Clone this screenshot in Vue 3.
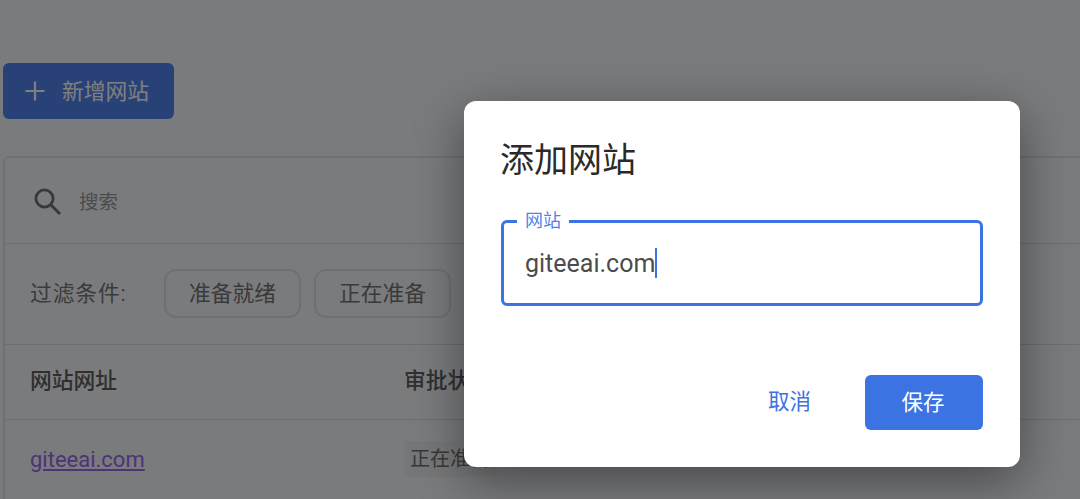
<script setup>
import { ref } from 'vue'

const site = ref('giteeai.com')
const filters = ['准备就绪', '正在准备']
</script>

<template>
  <div class="page">
    <button class="add-btn">
      <svg class="plus" viewBox="0 0 20 20" width="20" height="20" aria-hidden="true">
        <path d="M10 0.5V19.5M0.5 10H19.5" fill="none" stroke="currentColor" stroke-width="2.2" />
      </svg>
      <span class="add-label">新增网站</span>
    </button>

    <section class="card">
      <div class="search">
        <svg class="search-icon" viewBox="0 0 28 28" width="28" height="28" aria-hidden="true">
          <circle cx="11.5" cy="11.5" r="8.6" fill="none" stroke="currentColor" stroke-width="2.8" />
          <path d="M17.8 17.8L27 27" fill="none" stroke="currentColor" stroke-width="3" />
        </svg>
        <span class="placeholder">搜索</span>
      </div>

      <div class="filters">
        <span class="filter-label">过滤条件:</span>
        <button v-for="f in filters" :key="f" class="chip">{{ f }}</button>
      </div>

      <div class="table-row head">
        <span>网站网址</span>
        <span>审批状态</span>
      </div>
      <div class="table-row body">
        <a class="link" href="#">giteeai.com</a>
        <span class="tag">正在准备</span>
      </div>
    </section>

    <div class="scrim"></div>

    <div class="dialog">
      <h2 class="title">添加网站</h2>
      <div class="field">
        <span class="legend">网站</span>
        <span class="value">{{ site }}</span><span class="caret"></span>
      </div>
      <div class="actions">
        <button class="cancel">取消</button>
        <button class="save">保存</button>
      </div>
    </div>
  </div>
</template>

<style>
html, body { margin: 0; overflow: hidden; }
</style>

<style scoped>
.page {
  position: relative;
  width: 1080px;
  height: 499px;
  overflow: hidden;
  box-sizing: border-box;
  padding: 63px 0 0 3px;
  background: #f5f7fb;
  font-family: Roboto, "Noto Sans CJK SC", sans-serif;
  color: #5e5e5e;
}
button { font-family: inherit; cursor: pointer; }

.add-btn {
  display: flex;
  align-items: center;
  gap: 17px;
  box-sizing: border-box;
  width: 171px;
  height: 56px;
  padding: 0 0 0 22px;
  border: 0;
  border-radius: 6px;
  background: #5183ec;
  color: #fff;
  font-size: 21.75px;
}
.add-label { padding-bottom: 4px; }

.card {
  box-sizing: border-box;
  width: 1090px;
  height: 380px;
  margin-top: 37px;
  border: 2px solid #dfe0e3;
  border-right-width: 1px;
  border-radius: 6px;
}

.search {
  display: flex;
  align-items: center;
  height: 85px;
  padding-left: 28px;
  border-bottom: 1px solid #d9dadc;
}
.search-icon { color: #707070; }
.placeholder { margin-left: 18px; font-size: 19.5px; color: #989898; }

.filters {
  display: flex;
  align-items: center;
  box-sizing: border-box;
  height: 101px;
  padding: 0 0 2px 25px;
  border-bottom: 1px solid #d9dadc;
}
.filter-label {
  width: 134px;
  padding-bottom: 3px;
  font-size: 21.75px;
  letter-spacing: 0.9px;
  color: #767676;
}
.chip {
  box-sizing: border-box;
  width: 137px;
  height: 49px;
  margin-right: 13px;
  padding: 0 0 3px;
  border: 2px solid #dfe0e3;
  border-radius: 12px;
  background: transparent;
  font-size: 21.75px;
  color: #747474;
}

.table-row {
  display: grid;
  grid-template-columns: 374px 1fr;
  align-items: center;
  padding-left: 25px;
}
.head {
  box-sizing: border-box;
  height: 75px;
  padding-bottom: 7px;
  border-bottom: 1px solid #d9dadc;
  font-size: 21.75px;
  font-weight: 500;
}
.body { height: 78px; }
.link { font-size: 22px; color: #9c66f0; text-decoration: underline; text-underline-offset: 2px; }
.tag {
  justify-self: start;
  padding: 4px 6px;
  border-radius: 3px;
  background: #eceef1;
  font-size: 20px;
  line-height: 28px;
  color: #707070;
}

.scrim {
  position: absolute;
  inset: 0;
  background: rgba(0, 0, 0, 0.5);
}

.dialog {
  position: absolute;
  left: 464px;
  top: 101px;
  box-sizing: border-box;
  width: 556px;
  height: 366px;
  padding: 37px 37px 0;
  border-radius: 12px;
  background: #fff;
  box-shadow: 0 14px 50px rgba(0, 0, 0, 0.42);
}
.title {
  margin: 0 0 0 -1px;
  font-size: 34px;
  line-height: 44px;
  font-weight: 400;
  color: #2a2a2a;
}
.field {
  position: relative;
  display: flex;
  align-items: center;
  box-sizing: border-box;
  width: 482px;
  height: 86px;
  margin-top: 38px;
  padding-left: 21px;
  border: 3px solid #3b73e2;
  border-radius: 6px;
}
.legend {
  position: absolute;
  left: 13px;
  top: -13px;
  padding: 0 8px;
  background: #fff;
  font-size: 18px;
  line-height: 22px;
  color: #4f83ec;
}
.value { font-size: 25px; color: #4c4c4c; }
.caret { width: 1.5px; height: 30px; background: #3b73e2; }
.actions {
  display: flex;
  justify-content: flex-end;
  align-items: center;
  width: 482px;
  margin-top: 69px;
}
.cancel {
  margin-right: 54px;
  padding: 0 0 6px;
  border: 0;
  background: none;
  font-size: 21.5px;
  color: #3b73e2;
}
.save {
  width: 118px;
  height: 55px;
  padding: 0 2px 4px 0;
  border: 0;
  border-radius: 6px;
  background: #3b73e2;
  color: #fff;
  font-size: 21.5px;
}
</style>
